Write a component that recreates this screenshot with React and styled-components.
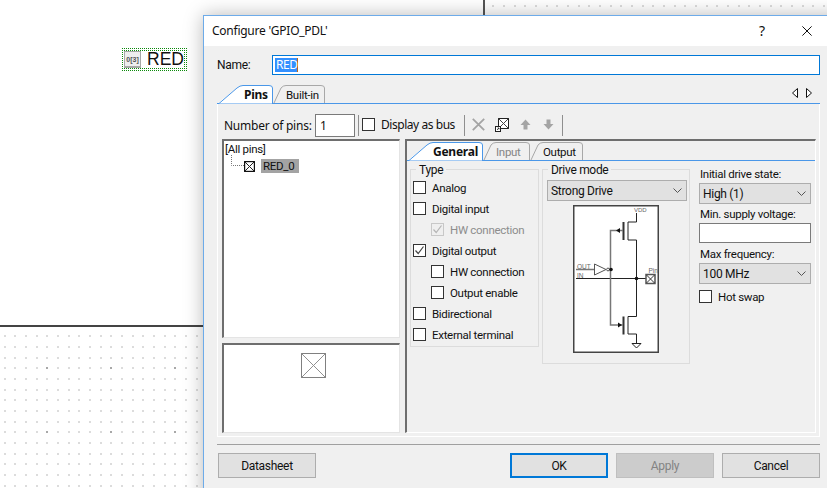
import React from 'react';
import styled, { createGlobalStyle, css } from 'styled-components';

const Global = createGlobalStyle`
  html, body { margin: 0; padding: 0; background: #fff; overflow: hidden; }
  * { box-sizing: border-box; }
`;

const compact = css`
  font-family: Roboto, "Noto Sans", sans-serif; font-size: 11.5px; letter-spacing: -0.3px;
`;

const Desktop = styled.div`
  position: relative; width: 827px; height: 488px; overflow: hidden; background: #fff;
  font-family: "Noto Sans", "Open Sans", sans-serif; font-size: 12px; color: #111; line-height: 16px;
  letter-spacing: -0.25px;
`;
const DotLayer = styled.svg`position: absolute; left: 0; top: 0;`;
const Sheet = styled.div`
  position: absolute; left: 0; top: 0; width: 485px; height: 327px; background: #fff;
  border-right: 2px solid #555; border-bottom: 2px solid #444;
`;
const SymbolFrame = styled.div`
  position: absolute; left: 121px; top: 48px; width: 66px; height: 23px; padding: 3px;
  background-image: conic-gradient(#0a8a0a 25%, #fff 0);
  background-size: 2px 2px;
`;
const SymbolInner = styled.div`
  height: 100%; background: #fff; display: flex; align-items: center; gap: 6px; padding-bottom: 1px;
  font-family: "Liberation Sans", Arial, sans-serif; font-size: 17.5px; letter-spacing: 0; color: #111;
`;
const SymbolIcon = styled.div`
  width: 17px; height: 17px; border: 1px solid #a8a8a8; border-bottom-width: 2px; background: #eee; flex: none;
  font-size: 7px; font-weight: 700; color: #555; text-align: center; line-height: 15px; letter-spacing: 0;
  margin-bottom: -1px;
`;

const Dialog = styled.div`
  position: absolute; left: 203px; top: 15px; width: 650px; height: 490px;
  border: 1px solid #6dabe9; background: #f0f0f0; box-shadow: 0 0 18px rgba(0,0,0,.28);
`;
const TitleBar = styled.div`
  height: 30px; background: #fff; display: flex; align-items: center; padding-left: 8px; width: 100%;
`;
const Title = styled.div`flex: none; width: 540px; color: #111;`;
const HelpMark = styled.div`flex: none; width: 30px; font-size: 14px; padding-left: 7px;`;
const CloseWrap = styled.div`flex: none; margin-left: 20px; display: flex;`;

const Body = styled.div`padding: 9px 0 0 13px; width: 616px;`;
const NameRow = styled.div`display: flex; align-items: center; height: 20px;`;
const NameLabel = styled.div`${compact} font-size: 12px; width: 55px;`;
const NameField = styled.div`
  flex: 1; height: 20px; border: 1px solid #0078d7; background: #fff; padding-left: 2px; display: flex; align-items: center;
`;
const Selected = styled.span`
  background: #3390ff; color: #fff; line-height: 14px; padding: 0 0 0 1px; border-right: 1px solid #b8671f; letter-spacing: -0.5px;
`;

const TabBar = styled.div`
  display: flex; align-items: flex-end; border-bottom: 1px solid ${p => p.$line};
  height: 19px; margin: ${p => p.$margin};
`;
const Tab = styled.div`
  position: relative; flex: none; height: 19px; width: ${p => p.$w}px; padding-left: ${p => p.$pad}px;
  line-height: 20px; margin-bottom: -1px;
  color: ${p => p.$muted ? '#858585' : '#111'};
  ${p => p.$active
    ? css`font-family: "Noto Sans", sans-serif; font-size: 12px; font-weight: 700; letter-spacing: -0.25px;`
    : compact}
`;
const TabShape = styled.svg`position: absolute; left: 0; top: 0;`;
const TabText = styled.span`position: relative;`;
const Pager = styled.div`margin-left: auto; margin-right: 8px; margin-bottom: 5px; display: flex; gap: 8px;`;

const TabPanel = styled.div`
  height: 333px; border: 1px solid #fff; border-top: 0; padding: 10px 0 0 4px; background: #f0f0f0;
`;
const Toolbar = styled.div`display: flex; align-items: center; height: 23px;`;
const PinLabel = styled.div`width: 93px; padding-left: 2px;`;
const PinCount = styled.div`
  width: 40px; height: 23px; border: 1px solid #7a7a7a; background: #fff; padding-left: 4px; line-height: 21px;
`;
const ToolSep = styled.div`width: 1px; height: 21px; background: #8f8f8f; margin-left: ${p => p.$ml}px; flex: none;`;
const ToolIcon = styled.svg`flex: none; margin-left: ${p => p.$ml}px; margin-bottom: 2px;`;
const BusLabel = styled.div`width: 83px; margin-left: 6px; margin-bottom: 2px; letter-spacing: -0.45px;`;

const Split = styled.div`display: flex; gap: 5px; margin-top: 2px;`;
const LeftCol = styled.div`display: flex; flex-direction: column; gap: 5px; width: 178px;`;
const Sunken = styled.div`
  background: ${p => p.$bg || '#fff'}; height: ${p => p.$h}px;
  border-style: solid; border-width: 2px 1px 1px 2px; border-color: #6e6e6e #e4e4e4 #e4e4e4 #6e6e6e;
`;
const Tree = styled(Sunken)`padding: 1px 0 0 1px; ${compact}`;
const TreeRoot = styled.div`height: 17px; line-height: 15px;`;
const TreeRow = styled.div`display: flex; align-items: center; height: 14px; margin-left: 6px;`;
const TreeName = styled.div`background: #a3a3a3; height: 14px; line-height: 14px; padding: 0 2px; margin-left: 6px; width: 38px;`;
const PreviewBox = styled(Sunken)`display: flex; justify-content: center; padding: 8px 0 0 3px;`;

const DetailPanel = styled(Sunken)`
  width: 411px; padding-top: 1px; background: #f0f0f0; border-right-color: #fff; border-bottom-color: #fff; ${compact}
`;
const DetailBody = styled.div`display: flex; padding-left: 3px;`;
const Group = styled.fieldset`
  margin: 0 0 0 ${p => p.$ml || 0}px; padding: ${p => p.$pad}; width: ${p => p.$w}px; height: ${p => p.$h}px;
  border: 1px solid #dcdcdc; flex: none; min-width: 0;
`;
const Legend = styled.legend`
  padding: 0 3px; margin-left: ${p => p.$ml}px; line-height: 18px; height: 16px; font-size: 12px;
`;
const CheckRow = styled.label`
  display: flex; align-items: center; height: 21px; padding-left: ${p => p.$indent ? 18 : 0}px;
  color: ${p => p.$disabled ? '#8d8d8d' : '#111'};
`;
const Box = styled.span`
  flex: none; width: 13px; height: 13px; background: ${p => p.$disabled ? '#efefef' : '#fff'};
  border: 1px solid ${p => p.$disabled ? '#c8c8c8' : '#333'}; display: flex; align-items: center; justify-content: center;
`;
const BusBox = styled(Box)`margin: 0 0 2px 3px;`;
const CheckText = styled.span`margin-left: 6px;`;
const Select = styled.div`
  height: 21px; width: ${p => p.$w}px; background: #e1e1e1; border: 1px solid #adadad; display: flex; align-items: center;
  justify-content: space-between; padding: 0 4px 0 3px; font-size: 12px;
`;
const Diagram = styled.svg`display: block; margin: 4px 0 0 26px;`;
const RightCol = styled.div`width: 112px; margin-left: 9px; padding-top: 5px; flex: none;`;
const FieldLabel = styled.div`height: 17px; line-height: 16px; margin-top: ${p => p.$mt || 0}px; padding-left: 1px;`;
const TextBox = styled.div`height: 20px; border: 1px solid #7a7a7a; background: #fff;`;
const HotSwap = styled.div`margin-top: 2px;`;

const Footer = styled.div`
  margin-top: 7px; border-top: 1px solid #a0a0a0; padding: 8px 0 0 1px; display: flex; gap: 8px;
`;
const Button = styled.div`
  ${compact} font-size: 12px;
  width: 98px; height: 25px; display: flex; align-items: center; justify-content: center;
  background: ${p => p.$disabled ? '#ccc' : '#e1e1e1'};
  border: ${p => p.$primary ? '2px solid #0078d7' : `1px solid ${p.$disabled ? '#bfbfbf' : '#adadad'}`};
  color: ${p => p.$disabled ? '#838383' : '#111'};
  margin-right: ${p => p.$push ? 'auto' : 0};
`;

const Check = ({ color }) => (
  <svg width="11" height="11" viewBox="0 0 11 11"><path d="M1.5 5.5 L4.2 8.5 L9.5 1.5" fill="none" stroke={color} strokeWidth="1.2" /></svg>
);
const Chevron = () => (
  <svg width="9" height="5" viewBox="0 0 9 5"><path d="M.5 .5 L4.5 4.5 L8.5 .5" fill="none" stroke="#555" strokeWidth="1" /></svg>
);
const CheckItem = ({ label, checked, disabled, indent }) => (
  <CheckRow $indent={indent} $disabled={disabled}>
    <Box $disabled={disabled}>{checked && <Check color={disabled ? '#b4b4b4' : '#444'} />}</Box>
    <CheckText>{label}</CheckText>
  </CheckRow>
);

function ActiveShape({ w, h = 19, slope, stroke = '#4a97e8' }) {
  return (
    <TabShape width={w} height={h}>
      <path d={`M0.5 ${h - 0.5} L${slope - 4} ${h - 0.5} L${slope} ${h - 0.5} L${w - 0.5} ${h - 0.5} L${w - 0.5} 3 Q${w - 0.5} .5 ${w - 4} .5 L${slope + 2} .5 Q${slope - 1} .5 ${slope - 4} 3 Z`} fill="#fff" stroke="none" />
      <path d={`M0 ${h - 0.5} L2 ${h - 0.5} L${slope - 4} 3 Q${slope - 1} .5 ${slope + 2} .5 L${w - 4} .5 Q${w - 0.5} .5 ${w - 0.5} 3 L${w - 0.5} ${h}`} fill="none" stroke={stroke} />
    </TabShape>
  );
}
function IdleShape({ w, h = 18, slope }) {
  return (
    <TabShape width={w} height={h + 1}>
      <path d={`M1 ${h} L${slope - 3} 3 Q${slope - 1} .5 ${slope + 2} .5 L${w - 4} .5 Q${w - 0.5} .5 ${w - 0.5} 3 L${w - 0.5} ${h}`} fill="#f0f0f0" stroke="#a8a8a8" />
    </TabShape>
  );
}

function DotGrid() {
  const dots = [];
  for (let j = 0; j < 46; j++) {
    for (let i = 0; i < 78; i++) {
      const shift = j === 0 ? -2 : 0;
      const x = Math.floor(4 + i * 64 / 6) + shift;
      const y = Math.floor(5 + j * 64 / 6);
      const major = i % 6 === 4 && j % 6 === 4;
      dots.push(<rect key={`${i}-${j}`} x={x} y={y} width="2" height="2" fill={major ? '#a8a8a8' : '#dcdcdc'} />);
    }
  }
  return <DotLayer width="827" height="488">{dots}</DotLayer>;
}

const DriveDiagram = () => (
  <Diagram width="86" height="148" viewBox="573 205 86 148">
    <rect x="573.75" y="205.75" width="84.5" height="146.5" fill="#fff" stroke="#444" strokeWidth="1.5" />
    <g fill="none" stroke="#222" strokeWidth="1">
      <path d="M636.5 213 V222 H628 V240 H636.5 V316.5 H628 V334 H636.5 V343" />
      <path d="M632 343.5 H641 L636.5 348 Z" />
      <path d="M576 278.5 H646" />
    </g>
    <path d="M623.5 222 V240 M623.5 316.5 V334.5" stroke="#333" strokeWidth="2" fill="none" />
    <path d="M576 269.5 H594.5 M623 230.5 H610.5 V325 H623" stroke="#777" strokeWidth="1.5" fill="none" />
    <path d="M594.5 264 L606 269.5 L594.5 275 Z" fill="#fff" stroke="#555" />
    <circle cx="608" cy="269.5" r="1.4" fill="#fff" stroke="#555" />
    <circle cx="611" cy="269.5" r="1.8" fill="#111" />
    <circle cx="636.5" cy="278.5" r="1.8" fill="#111" />
    <path d="M620 228 L616 230.5 L620 233 Z M618 322.5 L622 325 L618 327.5 Z" fill="#111" />
    <rect x="646" y="274.5" width="9" height="9" fill="#fff" stroke="#555" strokeWidth="1.5" />
    <path d="M646.5 275 L654.5 283 M654.5 275 L646.5 283" stroke="#333" />
    <g fontFamily="Liberation Sans, sans-serif" fontSize="6.5" fill="#666" letterSpacing="0">
      <text x="634" y="212" fontSize="6">VDD</text>
      <text x="577" y="268.5">OUT</text>
      <text x="577" y="277.5">IN</text>
      <text x="648.5" y="273">Pin</text>
    </g>
  </Diagram>
);

export default function App() {
  return (
    <Desktop>
      <Global />
      <DotGrid />
      <Sheet />
      <SymbolFrame>
        <SymbolInner>
          <SymbolIcon>0[3]</SymbolIcon>
          RED
        </SymbolInner>
      </SymbolFrame>

      <Dialog>
        <TitleBar>
          <Title>Configure 'GPIO_PDL'</Title>
          <HelpMark>?</HelpMark>
          <CloseWrap>
            <svg width="10" height="10" viewBox="0 0 10 10"><path d="M.4 .4 L9.6 9.6 M9.6 .4 L.4 9.6" stroke="#111" strokeWidth="1" /></svg>
          </CloseWrap>
        </TitleBar>
        <Body>
          <NameRow>
            <NameLabel>Name:</NameLabel>
            <NameField><Selected>RED</Selected></NameField>
          </NameRow>

          <TabBar $line="#4a97e8" $margin="10px 0 0">
            <Tab $w={56} $pad={27} $active>
              <ActiveShape w={56} slope={24} />
              <TabText>Pins</TabText>
            </Tab>
            <Tab $w={52} $pad={13}>
              <IdleShape w={52} slope={11} />
              <TabText>Built-in</TabText>
            </Tab>
            <Pager>
              <svg width="6" height="10" viewBox="0 0 6 10"><path d="M5.5 .5 V9.5 L.5 5 Z" fill="#fff" stroke="#111" /></svg>
              <svg width="6" height="10" viewBox="0 0 6 10"><path d="M.5 .5 V9.5 L5.5 5 Z" fill="#fff" stroke="#111" /></svg>
            </Pager>
          </TabBar>

          <TabPanel>
            <Toolbar>
              <PinLabel>Number of pins:</PinLabel>
              <PinCount>1</PinCount>
              <ToolSep $ml={3} />
              <BusBox />
              <BusLabel>Display as bus</BusLabel>
              <ToolSep $ml={0} />
              <ToolIcon $ml={7} width="13" height="13" viewBox="0 0 13 13"><path d="M.8 .8 L12.2 12.2 M12.2 .8 L.8 12.2" stroke="#a4a4a4" strokeWidth="1.8" /></ToolIcon>
              <ToolIcon $ml={10} width="14" height="14" viewBox="0 0 14 14">
                <rect x="3.5" y=".5" width="10" height="10" fill="#fff" stroke="#222" />
                <path d="M3.5 .5 L13.5 10.5 M13.5 .5 L3.5 10.5" stroke="#444" />
                <rect x=".5" y="8.5" width="5" height="5" fill="#fff" stroke="#222" />
                <path d="M2 12 L4 10 M2.6 10 H4 V11.4" stroke="#222" fill="none" strokeWidth=".8" />
              </ToolIcon>
              <ToolIcon $ml={11} width="11" height="11" viewBox="0 0 11 11"><path d="M5.5 .5 L10.5 6 H7.5 V10.5 H3.5 V6 H.5 Z" fill="#a4a4a4" /></ToolIcon>
              <ToolIcon $ml={12} width="11" height="11" viewBox="0 0 11 11"><path d="M3.5 .5 H7.5 V5 H10.5 L5.5 10.5 L.5 5 H3.5 Z" fill="#a4a4a4" /></ToolIcon>
              <ToolSep $ml={8} />
            </Toolbar>

            <Split>
              <LeftCol>
                <Tree $h={199}>
                  <TreeRoot>[All pins]</TreeRoot>
                  <TreeRow>
                    <svg width="13" height="14" viewBox="0 0 13 14" style={{ marginTop: -8 }}><path d="M.5 0 V10.5 H13" fill="none" stroke="#777" strokeDasharray="1 1" /></svg>
                    <svg width="11" height="11" viewBox="0 0 11 11"><rect x=".6" y=".6" width="9.8" height="9.8" fill="#fff" stroke="#111" strokeWidth="1.2" /><path d="M.6 .6 L10.4 10.4 M10.4 .6 L.6 10.4" stroke="#222" /></svg>
                    <TreeName>RED_0</TreeName>
                  </TreeRow>
                </Tree>
                <PreviewBox $h={90}>
                  <svg width="25" height="25" viewBox="0 0 25 25"><rect x=".5" y=".5" width="24" height="24" fill="#fff" stroke="#808080" /><path d="M.5 .5 L24.5 24.5 M24.5 .5 L.5 24.5" stroke="#909090" /></svg>
                </PreviewBox>
              </LeftCol>

              <DetailPanel $h={294}>
                <TabBar $line="#4a97e8" $margin="0">
                  <Tab $w={76} $pad={26} $active>
                    <ActiveShape w={76} slope={24} />
                    <TabText>General</TabText>
                  </Tab>
                  <Tab $w={47} $pad={13} $muted>
                    <IdleShape w={47} slope={11} />
                    <TabText>Input</TabText>
                  </Tab>
                  <Tab $w={53} $pad={13}>
                    <IdleShape w={53} slope={11} />
                    <TabText>Output</TabText>
                  </Tab>
                </TabBar>
                <DetailBody>
                  <Group $w={129} $h={186} $pad="0 2px">
                    <Legend $ml={3}>Type</Legend>
                    <CheckItem label="Analog" />
                    <CheckItem label="Digital input" />
                    <CheckItem label="HW connection" indent checked disabled />
                    <CheckItem label="Digital output" checked />
                    <CheckItem label="HW connection" indent />
                    <CheckItem label="Output enable" indent />
                    <CheckItem label="Bidirectional" />
                    <CheckItem label="External terminal" />
                  </Group>
                  <Group $w={148} $h={203} $ml={3} $pad="3px 2px 0 4px">
                    <Legend $ml={1}>Drive mode</Legend>
                    <Select $w={140}>Strong Drive<Chevron /></Select>
                    <DriveDiagram />
                  </Group>
                  <RightCol>
                    <FieldLabel>Initial drive state:</FieldLabel>
                    <Select $w={112}>High (1)<Chevron /></Select>
                    <FieldLabel $mt={2}>Min. supply voltage:</FieldLabel>
                    <TextBox />
                    <FieldLabel $mt={3}>Max frequency:</FieldLabel>
                    <Select $w={112}>100 MHz<Chevron /></Select>
                    <HotSwap><CheckItem label="Hot swap" /></HotSwap>
                  </RightCol>
                </DetailBody>
              </DetailPanel>
            </Split>
          </TabPanel>

          <Footer>
            <Button $push>Datasheet</Button>
            <Button $primary>OK</Button>
            <Button $disabled>Apply</Button>
            <Button>Cancel</Button>
          </Footer>
        </Body>
      </Dialog>
    </Desktop>
  );
}
